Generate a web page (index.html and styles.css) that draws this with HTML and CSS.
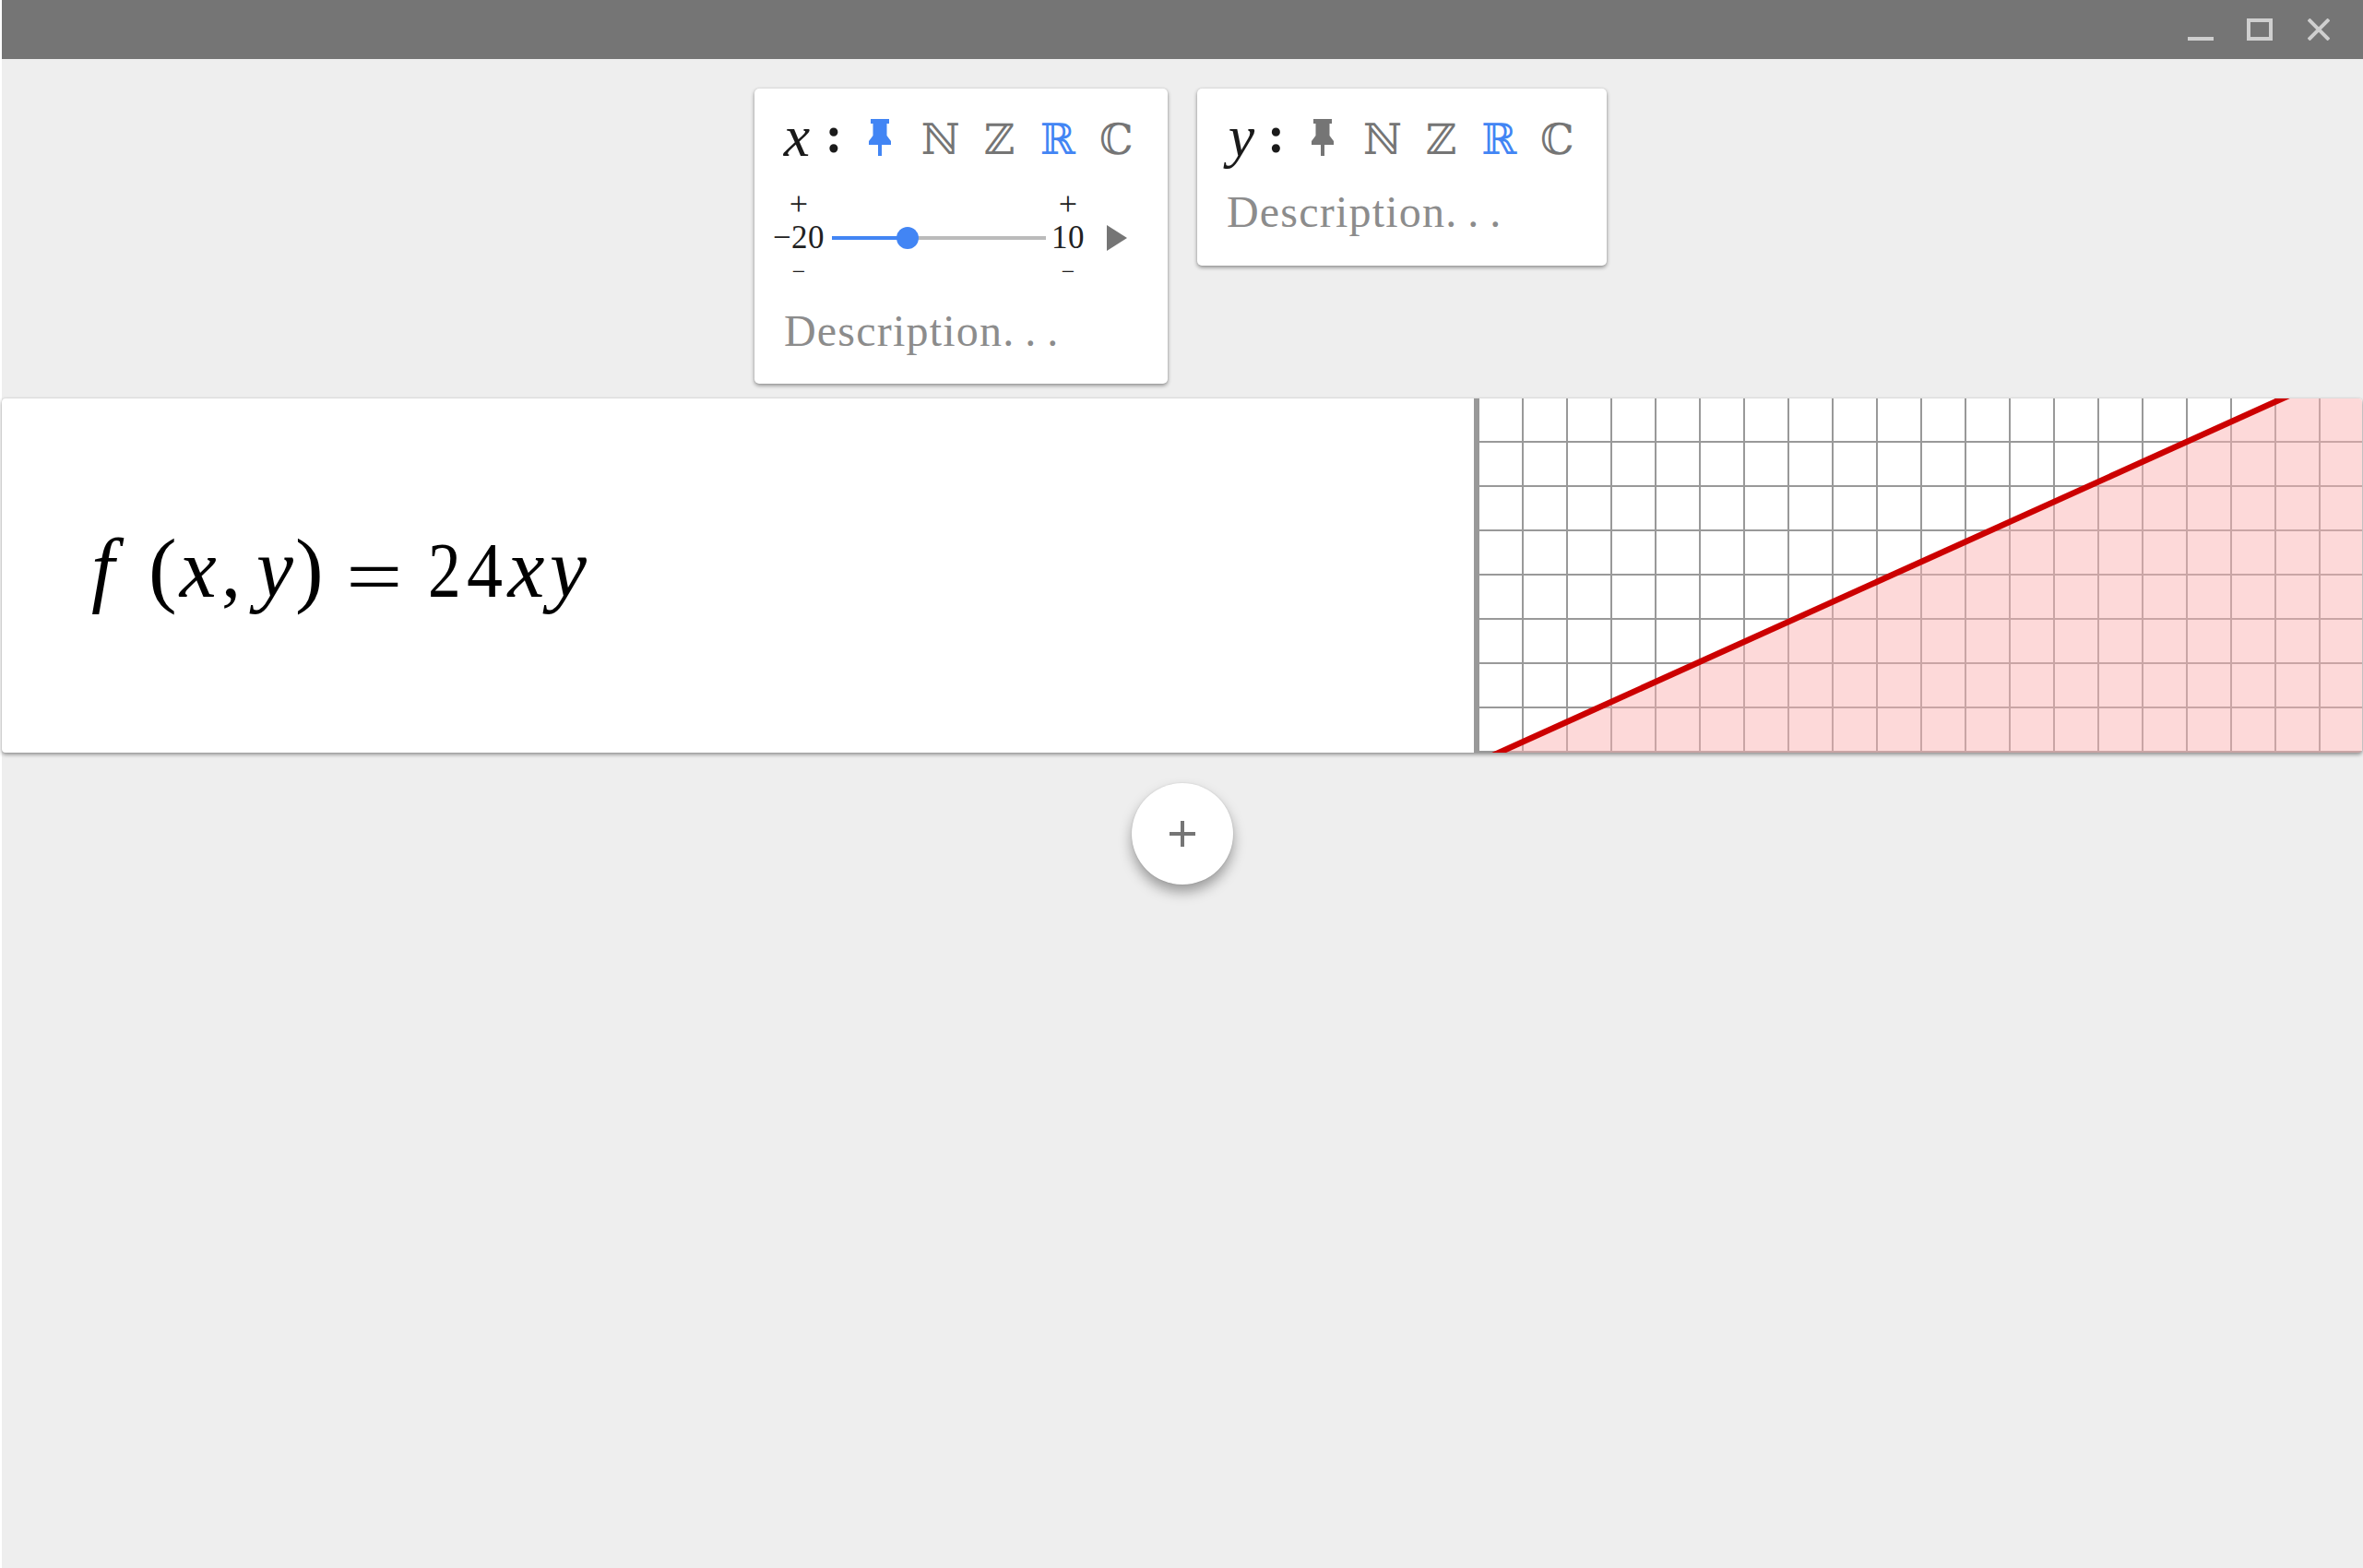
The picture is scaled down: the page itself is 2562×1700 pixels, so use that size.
FILE: index.html
```html
<!DOCTYPE html>
<html lang="en">
<head>
<meta charset="utf-8">
<title>Function plot</title>
<link rel="stylesheet" href="styles.css">
</head>
<body>
<div class="app">
  <header class="titlebar">
    <svg class="winicon" width="28" height="24" viewBox="0 0 28 24"><rect y="20" width="28" height="4"/></svg>
    <svg class="winicon" width="28" height="24" viewBox="0 0 28 24"><path d="M0 0H28V24H0ZM4 4V20H24V4Z" fill-rule="evenodd"/></svg>
    <svg class="winicon" width="24" height="24" viewBox="0 0 24 24"><path d="M1 1L23 23M23 1L1 23" stroke="#cfcfcf" stroke-width="4" fill="none"/></svg>
  </header>

  <section class="vars">
    <article class="card">
      <div class="head">
        <span class="var">x</span><span class="colon">:</span>
        <svg class="pin pin-on" width="24" height="40" viewBox="0 0 24 40"><path d="M2 0H22V5H19.5V18L24 24V28H14V40H10V28H0V24L4.5 18V5H2Z"/></svg>
        <span class="set">ℕ</span><span class="set">ℤ</span><span class="set set-on">ℝ</span><span class="set">ℂ</span>
      </div>
      <div class="slider">
        <div class="bound bound-min"><span class="step">+</span><span class="value">−20</span><span class="step step-minus">−</span></div>
        <div class="track"><div class="track-fill"></div><div class="thumb"></div></div>
        <div class="bound bound-max"><span class="step">+</span><span class="value">10</span><span class="step step-minus">−</span></div>
        <svg class="play" width="22" height="28" viewBox="0 0 22 28"><path d="M0 0L22 14L0 28Z"/></svg>
      </div>
      <div class="desc">Description<span class="dots">. . .</span></div>
    </article>
    <article class="card">
      <div class="head">
        <span class="var var-y">y</span><span class="colon">:</span>
        <svg class="pin" width="24" height="40" viewBox="0 0 24 40"><path d="M2 0H22V5H19.5V18L24 24V28H14V40H10V28H0V24L4.5 18V5H2Z"/></svg>
        <span class="set">ℕ</span><span class="set">ℤ</span><span class="set set-on">ℝ</span><span class="set">ℂ</span>
      </div>
      <div class="desc">Description<span class="dots">. . .</span></div>
    </article>
  </section>

  <section class="row">
    <div class="formula">
      <span class="g i f">f</span><span class="g p lp">(</span><span class="g i x1">x</span><span class="g c">,</span><span class="g i y1">y</span><span class="g p rp">)</span><span class="g eq">=</span><span class="g d2">2</span><span class="g d4">4</span><span class="g i x2">x</span><span class="g i y2">y</span>
    </div>
    <div class="graph">
      <svg class="plot" width="960" height="384" viewBox="0 0 960 384">
        <defs>
          <pattern id="gridw" patternUnits="userSpaceOnUse" x="48" y="-2" width="48" height="48">
            <rect width="48" height="48" fill="#fff"/>
            <rect width="2" height="48" fill="#999"/>
            <rect width="48" height="2" fill="#999"/>
          </pattern>
          <pattern id="gridp" patternUnits="userSpaceOnUse" x="48" y="-2" width="48" height="48">
            <rect width="48" height="48" fill="#fdd9d9"/>
            <rect width="2" height="48" fill="#c9a5a5"/>
            <rect width="48" height="2" fill="#c9a5a5"/>
          </pattern>
        </defs>
        <rect width="960" height="384" fill="url(#gridw)"/>
        <polygon points="23,384 873,0 960,0 960,384" fill="url(#gridp)"/>
        <line x1="1" y1="394" x2="895" y2="-10" stroke="#cc0000" stroke-width="6.5"/>
      </svg>
    </div>
  </section>

  <button class="fab" type="button" aria-label="Add">
    <svg width="28" height="28" viewBox="0 0 28 28"><path d="M12 0H16V12H28V16H16V28H12V16H0V12H12Z"/></svg>
  </button>
</div>
</body>
</html>
```

FILE: styles.css
```css
* { box-sizing: border-box; }
html, body { margin: 0; padding: 0; }
body { background: #fff; font-family: "Liberation Serif", serif; }
.app {
  margin-left: 2px;
  min-height: 1700px;
  background: #eeeeee;
  display: flex;
  flex-direction: column;
}
.titlebar {
  height: 64px;
  background: #757575;
  display: flex;
  justify-content: flex-end;
  align-items: flex-start;
  padding: 20px 36px 0 0;
  gap: 36px;
}
.winicon { fill: #cfcfcf; display: block; }
.winicon + .winicon + .winicon { margin-left: 2px; }

.vars {
  display: flex;
  justify-content: center;
  align-items: flex-start;
  gap: 32px;
  padding: 32px 4px 16px 0;
}
.card {
  background: #fff;
  border-radius: 5px;
  box-shadow: 0 2px 4px rgba(0,0,0,.4), 0 0 2px rgba(0,0,0,.1);
  padding: 24px 22px 0 26px;
  height: 192px;
}
.card:first-child { height: 320px; width: 448px; }
.card:last-child { width: 444px; }
.head {
  display: flex;
  align-items: center;
  height: 64px;
}
.var {
  width: 40px;
  text-align: center;
  font-style: italic;
  font-size: 64px;
  line-height: 64px;
  color: #1a1a1a;
  position: relative;
  top: -4px;
}
.var-y { padding-left: 4px; }
.colon {
  width: 40px;
  text-align: center;
  font-size: 56px;
  line-height: 64px;
  font-weight: 700;
  color: #1a1a1a;
  position: relative;
  top: -6px;
}
.pin { margin: 0 22px 0 18px; fill: #757575; flex: none; position: relative; top: -3px; }
.pin-on { fill: #4285f4; }
.set {
  width: 63.5px;
  text-align: center;
  font-family: "DejaVu Serif", serif;
  font-size: 46px;
  line-height: 64px;
  color: #757575;
  position: relative;
  top: -1px;
}
.set-on { color: #4285f4; }

.slider {
  display: flex;
  align-items: center;
  height: 111px;
  margin: 18px 0 0 -4px;
}
.bound {
  display: flex;
  flex-direction: column;
  align-items: center;
  color: #212121;
  flex: none;
}
.bound-min { width: 52px; }
.bound-max { width: 48px; }
.step { font-size: 36px; line-height: 36px; height: 36px; }
.step-minus { font-size: 26px; }
.value { font-size: 35px; line-height: 38px; height: 38px; white-space: nowrap; letter-spacing: .5px; }
.track {
  width: 232px;
  height: 4px;
  background: #bbbbbb;
  position: relative;
  margin-left: 10px;
  flex: none;
}
.track-fill { width: 82px; height: 4px; background: #4285f4; }
.thumb {
  position: absolute;
  left: 70px;
  top: -10px;
  width: 24px;
  height: 24px;
  border-radius: 50%;
  background: #4285f4;
}
.play { fill: #757575; margin-left: 18px; flex: none; }

.desc {
  font-size: 48px;
  line-height: 60px;
  color: #8c8c8c;
  letter-spacing: 1.2px;
  margin: 16px 0 0 6px;
  white-space: nowrap;
}
.dots { letter-spacing: 0; }

.row {
  height: 384px;
  margin-right: 1px;
  display: flex;
  background: #fff;
  border-radius: 4px;
  overflow: hidden;
  box-shadow: 0 2px 4px rgba(0,0,0,.4), 0 0 2px rgba(0,0,0,.1);
  flex: none;
}
.formula {
  width: 1596px;
  flex: none;
  display: flex;
  align-items: baseline;
  padding: 134px 0 0 97px;
  font-size: 84px;
  line-height: 100px;
  color: #000;
  white-space: nowrap;
}
.g { display: block; }
.i { font-size: 90px; font-style: italic; }
.p { font-size: 92px; }
.lp { margin-left: 37px; }
.x1 { margin-left: 3px; }
.c { margin-left: 5.5px; }
.y1 { margin-left: 17px; }
.rp { margin-left: 2px; }
.eq { margin-left: 31px; transform: translateY(7px) scaleX(1.3); }
.d2 { margin-left: 35px; transform: scaleX(.85); transform-origin: left; }
.d4 { transform: scaleX(.93); transform-origin: left; }
.x2 { margin-left: 2.5px; }
.y2 { margin-left: 5.5px; }

.graph {
  flex: 1;
  border-left: 4px solid #999;
  overflow: hidden;
}
.plot { display: block; }

.fab {
  width: 110px;
  height: 110px;
  border: 0;
  padding: 0;
  border-radius: 50%;
  background: #fff;
  box-shadow: 0 8px 14px rgba(0,0,0,.35), 0 0 2px rgba(0,0,0,.12);
  align-self: center;
  margin-top: 33px;
  display: flex;
  align-items: center;
  justify-content: center;
}
.fab svg { fill: #757575; display: block; }
```
